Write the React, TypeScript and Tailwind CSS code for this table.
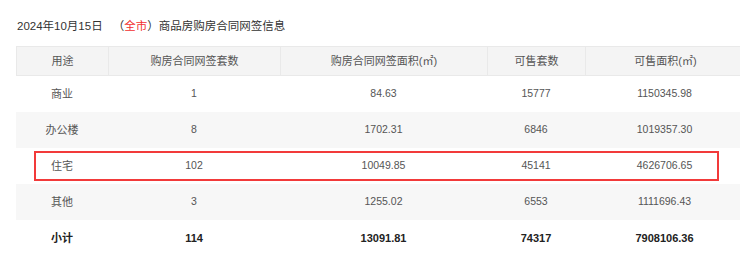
import React from "react";

const rows = [
  ["商业", "1", "84.63", "15777", "1150345.98"],
  ["办公楼", "8", "1702.31", "6846", "1019357.30"],
  ["住宅", "102", "10049.85", "45141", "4626706.65"],
  ["其他", "3", "1255.02", "6553", "1111696.43"],
];
const total = ["小计", "114", "13091.81", "74317", "7908106.36"];
const widths = ["w-[92px]", "w-[172px]", "w-[207px]", "w-[98px]", "w-[159px]"];
const heads = ["用途", "购房合同网签套数", "购房合同网签面积(㎡)", "可售套数", "可售面积(㎡)"];

export default function App() {
  return (
    <div
      className="w-[740px] h-[266px] overflow-hidden bg-white text-[#333]"
      style={{ fontFamily: '"Liberation Sans", "Noto Sans CJK SC", sans-serif' }}
    >
      <div className="pl-[17px] pt-[18px] h-[46px] text-[11.5px] leading-[16px] text-[#333]">
        <span>2024年10月15日</span>
        <span className="ml-[10px]">（</span>
        <span className="text-[#f23030]">全市</span>
        <span>）商品房购房合同网签信息</span>
      </div>
      <div className="relative ml-[16px] w-[728px]">
        <div className="flex h-[30px] bg-[#f4f4f4] border border-[#e9e9e9] text-[11px] text-[#555]">
          {heads.map((h, i) => (
            <div
              key={i}
              className={`${widths[i]} shrink-0 flex items-center justify-center ${i < 4 ? "border-r border-[#e9e9e9]" : ""}`}
            >
              {h}
            </div>
          ))}
        </div>
        {rows.map((r, ri) => (
          <div
            key={ri}
            className={`flex h-[36px] text-[#555] ${ri % 2 === 1 ? "bg-[#f7f7f7]" : "bg-white"}`}
          >
            {r.map((c, i) => (
              <div
                key={i}
                className={`${widths[i]} shrink-0 flex items-center justify-center ${i === 0 ? "text-[11px]" : "text-[10.5px]"}`}
              >
                {c}
              </div>
            ))}
          </div>
        ))}
        <div className="flex h-[36px] font-bold text-[#222]">
          {total.map((c, i) => (
            <div
              key={i}
              className={`${widths[i]} shrink-0 flex items-center justify-center ${i === 0 ? "text-[11px]" : "text-[11px]"}`}
            >
              {c}
            </div>
          ))}
        </div>
        <div className="absolute left-[18px] top-[105px] w-[685px] h-[30px] border-2 border-[#f23a3a]" />
      </div>
    </div>
  );
}
